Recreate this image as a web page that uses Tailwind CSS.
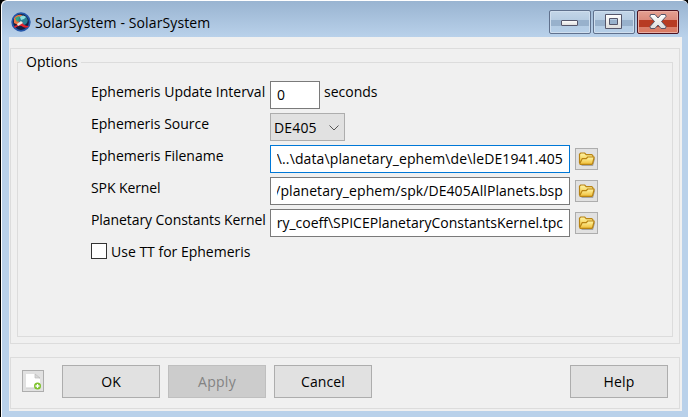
<!DOCTYPE html>
<html lang="en">
<head>
<meta charset="utf-8">
<title>SolarSystem</title>
<script src="https://cdn.jsdelivr.net/npm/@tailwindcss/browser@4"></script>
</head>
<body class="w-[688px] h-[417px] overflow-hidden bg-black font-['Open_Sans','Noto_Sans',sans-serif] text-[14px] leading-5 tracking-[0px] text-black">
<svg class="absolute w-0 h-0">
  <defs>
    <linearGradient id="gold" x2="0" y2="1"><stop stop-color="#fff6a8"/><stop offset="1" stop-color="#f0bd35"/></linearGradient>
    <linearGradient id="silver" x2="0" y2="1"><stop stop-color="#fff"/><stop offset="1" stop-color="#dcdcdc"/></linearGradient>
    <symbol id="folder" viewBox="0 0 18 16">
      <path d="M3.500 14.300h11l2-7" fill="none" stroke="#777" stroke-opacity=".55" stroke-width="1.500"/>
      <path d="M1.500 12V3.200L2.700 2h4l1.500 1.700h5.600L15 4.900V6" fill="url(#gold)" stroke="#b98413" stroke-width="1.200"/>
      <path d="M1.700 12.800 4.300 7.600h4L9.700 6h6.500l-1.700 6.800-1 .6H2.500z" fill="url(#gold)" stroke="#b98413" stroke-width="1.200" stroke-linejoin="round"/>
    </symbol>
  </defs>
</svg>
<main class="ml-px w-[687px] h-[417px] border-l border-t border-white rounded-t-md bg-[#b9d1ea]">
  <header class="h-9 pl-[9px] pr-[9px] flex items-start bg-linear-to-b from-[#99b4d1] to-[#b9d1ea] rounded-t-md">
    <svg class="mt-[11px] w-5 h-5 shrink-0" viewBox="0 0 20 20">
      <circle cx="10" cy="10" r="8.800" fill="#142044" stroke="#2457aa" stroke-width="1.800"/>
      <path d="M3 6q3-4 8-3l-1 5-3 5-4-2z" fill="#ed7540"/><path d="M4 6l4-2 2 3-4 3z" fill="#35a783"/>
      <circle cx="12" cy="8.500" r="4.700" fill="#2c8195"/><path d="M9 5q3-3 6 0l-2 2-3 1z" fill="#8ce0df"/>
      <path d="M3 14q5-1 8-4 1 4 7 4-2 3-6 1-3-3-8 1z" fill="#e4232d"/><path d="M6 12l4-3 2 2-5 3z" fill="#efe5df"/>
    </svg>
    <h1 class="ml-1 mt-[12px] grow whitespace-nowrap tracking-[0.12px]">SolarSystem - SolarSystem</h1>
    <div class="flex gap-[2px] mt-[9px]">
      <button class="w-[42px] h-6 rounded-[2px] border border-[#60718d] bg-linear-to-b from-[#c4d6e8] from-0% via-[#b5cbe1] via-45% to-[#b4cee8] shadow-[inset_0_0_0_1px_#cfdeee]">
        <svg class="w-10 h-[22px]" viewBox="0 0 40 22"><path d="M1 9h38v6H1z" fill="#98b1cc"/><rect x="11.500" y="9.500" width="16" height="5" rx=".5" fill="url(#silver)" stroke="#55566b"/></svg>
      </button>
      <button class="w-[42px] h-6 rounded-[2px] border border-[#60718d] bg-linear-to-b from-[#c4d6e8] from-0% via-[#b5cbe1] via-45% to-[#b4cee8] shadow-[inset_0_0_0_1px_#cfdeee]">
        <svg class="w-10 h-[22px]" viewBox="0 0 40 22"><path d="M1 9h38v6H1z" fill="#98b1cc"/><path d="M11.500 3.500h16v14h-16zM15.500 7.500v6h8v-6z" fill="url(#silver)" fill-rule="evenodd" stroke="#55566b"/></svg>
      </button>
      <button class="w-[42px] h-6 rounded-[2px] border border-[#4b1220] bg-linear-to-b from-[#e4a092] from-0% via-[#d9887a] via-44% to-[#d9785f] shadow-[inset_0_0_0_1px_#e9aea3]">
        <svg class="w-10 h-[22px]" viewBox="0 0 40 22"><path d="M1 9h38v7H1z" fill="#b73b23"/><path d="M12.500 3.500H17l3 3.500 3-3.500h4.500l.5 2-4.500 5 4.500 5-.5 2H23l-3-3.500-3 3.500h-4.500l-.5-2 4.500-5-4.500-5z" fill="url(#silver)" stroke="#55566b"/></svg>
      </button>
    </div>
  </header>
  <div class="ml-[7px] w-[673px] h-[374px] pl-px pt-[11px] bg-[#f0f0f0]">
    <section class="w-[670px] h-[296px] border border-[#dcdcdc] pl-[6px] pt-[3px]">
      <fieldset class="w-[656px] h-[285px] border border-[#dcdcdc]">
        <legend class="ml-[5px] px-[3px] h-5">Options</legend>
        <div class="grid grid-cols-[179px_1fr] auto-rows-[32px] pl-[73px] mt-[9px] whitespace-nowrap">
          <label class="pt-px">Ephemeris Update Interval</label>
          <div class="flex"><div class="w-[50px] h-7 border border-[#7a7a7a] bg-white pl-[6px] pt-[3px]">0</div><span class="ml-1 pt-px">seconds</span></div>
          <label class="pt-px">Ephemeris Source</label>
          <div><div class="w-[75px] h-7 border border-[#adadad] bg-[#e1e1e1] pl-[3px] pr-[5px] pt-1 flex justify-between tracking-[0.15px]">DE405<svg class="w-[10px] h-[10px] mt-[5px]" viewBox="0 0 10 10"><path d="M.5 2.500 5 7l4.500-4.500" fill="none" stroke="#555"/></svg></div></div>
          <label class="pt-px">Ephemeris Filename</label>
          <div class="flex gap-[5px]"><div class="w-[300px] h-7 border border-[#0078d7] bg-white px-[6px] pt-[3px]"><div class="overflow-hidden flex justify-end tracking-[0.12px]">\..\data\planetary_ephem\de\leDE1941.405</div></div><button class="mt-[3px] w-[23px] h-[22px] border border-[#adadad] bg-[#e1e1e1] flex items-center justify-center"><svg class="w-[18px] h-4 shrink-0"><use href="#folder"/></svg></button></div>
          <label class="pt-px tracking-[-0.1px]">SPK Kernel</label>
          <div class="flex gap-[5px]"><div class="w-[300px] h-7 border border-[#7a7a7a] bg-white px-[6px] pt-[3px]"><div class="overflow-hidden flex justify-end tracking-[0.07px]">/planetary_ephem/spk/DE405AllPlanets.bsp</div></div><button class="mt-[3px] w-[23px] h-[22px] border border-[#adadad] bg-[#e1e1e1] flex items-center justify-center"><svg class="w-[18px] h-4 shrink-0"><use href="#folder"/></svg></button></div>
          <label class="pt-px tracking-[-0.07px]">Planetary Constants Kernel</label>
          <div class="flex gap-[5px]"><div class="w-[300px] h-7 border border-[#7a7a7a] bg-white px-[6px] pt-[3px]"><div class="overflow-hidden flex justify-end">ry_coeff\SPICEPlanetaryConstantsKernel.tpc</div></div><button class="mt-[3px] w-[23px] h-[22px] border border-[#adadad] bg-[#e1e1e1] flex items-center justify-center"><svg class="w-[18px] h-4 shrink-0"><use href="#folder"/></svg></button></div>
          <label class="flex"><span class="mt-[2px] mr-1 w-4 h-4 border border-[#333] bg-white"></span><span class="pt-px">Use TT for Ephemeris</span></label>
        </div>
      </fieldset>
    </section>
    <footer class="mt-[13px] w-[670px] h-[52px] border border-[#dcdcdc] flex items-start pl-[11px] pr-[11px] pt-[7px]">
      <button class="mt-[5px] w-[22px] h-[22px] border border-[#adadad] bg-[#e1e1e1]">
        <svg class="w-5 h-5" viewBox="0 0 20 20"><path d="M3 3h9l5 5v9H3z" fill="#fff"/><path d="M12 3v4h5z" fill="#d9d9d9" stroke="#bbb" stroke-width=".7"/><path d="M3 17h9" stroke="#ccc"/><circle cx="14.500" cy="15" r="3.500" fill="#7fc32e"/><path d="M14.500 13v4m-2-2h4" stroke="#fff" stroke-width="1.300"/></svg>
      </button>
      <button class="ml-[18px] w-[98px] h-[33px] border border-[#adadad] bg-[#e1e1e1]">OK</button>
      <button class="ml-2 w-[98px] h-[33px] border border-[#bfbfbf] bg-[#ccc] text-[#838383] tracking-[0.3px]">Apply</button>
      <button class="ml-2 w-[98px] h-[33px] border border-[#adadad] bg-[#e1e1e1] tracking-[0.1px]">Cancel</button>
      <button class="ml-auto w-[98px] h-[33px] border border-[#adadad] bg-[#e1e1e1] tracking-[0.2px]">Help</button>
    </footer>
  </div>
</main>
</body>
</html>
